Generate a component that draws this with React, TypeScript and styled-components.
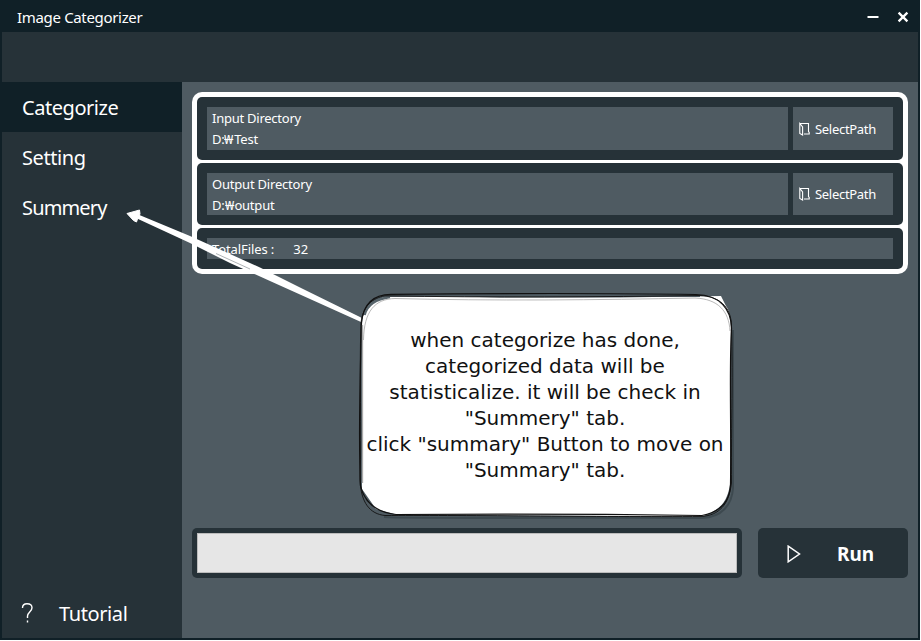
import React from "react";
import styled, { createGlobalStyle } from "styled-components";

const GlobalStyle = createGlobalStyle`
  * { box-sizing: border-box; }
  body { margin: 0; background: #fff; overflow: hidden; }
`;

const Window = styled.div`
  position: relative;
  width: 920px;
  height: 640px;
  padding: 0 2px 2px;
  background: #102027;
  color: #fff;
  font-family: "Noto Sans", "Noto Sans CJK KR", sans-serif;
  display: flex;
  flex-direction: column;
`;

const TitleBar = styled.header`
  height: 32px;
  flex: none;
  display: flex;
  align-items: center;
  justify-content: space-between;
  padding: 2px 9px 0 15px;
  font-size: 15px;
  letter-spacing: -0.33px;
`;

const WindowButtons = styled.div`
  display: flex;
  gap: 18px;
  svg { display: block; }
`;

const Banner = styled.div`
  height: 50px;
  flex: none;
  background: #263238;
`;

const Body = styled.div`
  flex: 1;
  display: flex;
`;

const Sidebar = styled.nav`
  width: 180px;
  display: flex;
  flex-direction: column;
  background: #263238;
`;

const NavItem = styled.div<{ $active?: boolean; $spacing: number }>`
  height: 50px;
  padding: 0 0 0 20px;
  display: flex;
  align-items: center;
  font-size: 20px;
  letter-spacing: ${(p) => p.$spacing}px;
  background: ${(p) => (p.$active ? "#102027" : "transparent")};
`;

const Tutorial = styled.div`
  margin-top: auto;
  height: 50px;
  padding: 0 0 0 18px;
  display: flex;
  align-items: center;
  gap: 26px;
  font-size: 20px;
  letter-spacing: -0.4px;
`;

const Main = styled.main`
  flex: 1;
  display: flex;
  flex-direction: column;
  padding: 10px 10px 60px;
  background: #4f5b62;
`;

const Panel = styled.section`
  display: flex;
  flex-direction: column;
  gap: 3px;
  padding: 5px;
  border-radius: 10px;
  background: #fff;
`;

const Card = styled.div<{ $height: number }>`
  height: ${(p) => p.$height}px;
  padding: 10px;
  display: flex;
  gap: 5px;
  border-radius: 5px;
  background: #263238;
`;

const Field = styled.div`
  flex: 1;
  padding: 1px 5px 0;
  background: #4f5b62;
  font-size: 13px;
  line-height: 21px;
  white-space: pre;
`;

const Line = styled.div<{ $spacing: number }>`
  letter-spacing: ${(p) => p.$spacing}px;
`;

const Won = styled.span`
  display: inline-block;
  width: 9.8px;
  font-size: 12px;
  line-height: 1;
  letter-spacing: 0;
  transform: scaleX(1.15);
  transform-origin: left;
`;

const TotalRow = styled.div`
  display: flex;
  gap: 19px;
`;

const SelectButton = styled.div`
  width: 100px;
  padding: 1px 0 0 6px;
  display: flex;
  align-items: center;
  gap: 5px;
  background: #4f5b62;
  font-size: 13px;
`;

const Footer = styled.div`
  margin-top: auto;
  height: 50px;
  display: flex;
  gap: 16px;
`;

const ProgressFrame = styled.div`
  width: 550px;
  padding: 5px;
  border-radius: 5px;
  background: #263238;
`;

const ProgressTrack = styled.div`
  height: 100%;
  border: 1px solid #bcbcbc;
  background: #e6e6e6;
`;

const RunButton = styled.div`
  width: 150px;
  display: flex;
  align-items: center;
  gap: 36px;
  padding: 1px 0 0 29px;
  border-radius: 5px;
  background: #263238;
  font-size: 19px;
  font-weight: 700;
`;

const Overlay = styled.svg`
  position: absolute;
  left: 0;
  top: 0;
  pointer-events: none;
`;

const CalloutText = styled.div`
  position: absolute;
  left: 345px;
  top: 327px;
  width: 400px;
  color: #111;
  font-family: "DejaVu Sans", sans-serif;
  font-size: 20px;
  line-height: 26px;
  text-align: center;
  white-space: nowrap;
`;

const FolderIcon = () => (
  <svg width="11" height="14" viewBox="0 0 11 14" fill="none" stroke="#fff">
    <path d="M1 1.500H9.500V9.500L10.200 10.500V12H5" strokeWidth="1.100" />
    <path d="M.8 1.500V11.500L3.600 13V5L.8 1.500Z" strokeWidth="1.100" />
  </svg>
);

const PathCard = ({ title, path, spacing }: { title: string; path: string; spacing: number }) => (
  <Card $height={62.5}>
    <Field>
      <Line $spacing={spacing}>{title}</Line>
      <Line $spacing={spacing}>D:<Won>₩</Won>{path}</Line>
    </Field>
    <SelectButton>
      <FolderIcon />
      <Line $spacing={-0.3}>SelectPath</Line>
    </SelectButton>
  </Card>
);

export default function App() {
  return (
    <>
      <GlobalStyle />
      <Window>
        <TitleBar>
          <span>Image Categorizer</span>
          <WindowButtons>
            <svg width="12" height="12" viewBox="0 0 12 12" stroke="#fff" strokeWidth="2">
              <path d="M0.500 6H11.500" />
            </svg>
            <svg width="12" height="12" viewBox="0 0 12 12" stroke="#fff" strokeWidth="2.3">
              <path d="M1.600 1.600L10.400 10.400M10.400 1.600L1.600 10.400" />
            </svg>
          </WindowButtons>
        </TitleBar>
        <Banner />
        <Body>
          <Sidebar>
            <NavItem $active $spacing={-0.45}>Categorize</NavItem>
            <NavItem $spacing={-0.4}>Setting</NavItem>
            <NavItem $spacing={-0.85}>Summery</NavItem>
            <Tutorial>
              <svg width="13" height="22" viewBox="0 0 13 22" fill="none" stroke="#fff" strokeWidth="1.4">
                <path d="M2.500 6C2.500 3 4 1.700 7 1.700S12 3.300 12 5.700C12 9.500 7.500 10.500 7.500 14V16M7.500 18.500V20.500" />
              </svg>
              <span>Tutorial</span>
            </Tutorial>
          </Sidebar>
          <Main>
            <Panel>
              <PathCard title="Input Directory" path="Test" spacing={-0.25} />
              <PathCard title="Output Directory" path="output" spacing={-0.2} />
              <Card $height={41.2}>
                <Field>
                  <TotalRow>
                    <Line $spacing={-0.1}>TotalFiles :</Line>
                    <Line $spacing={0}>32</Line>
                  </TotalRow>
                </Field>
              </Card>
            </Panel>
            <Footer>
              <ProgressFrame>
                <ProgressTrack />
              </ProgressFrame>
              <RunButton>
                <svg width="14" height="18" viewBox="0 0 14 18" fill="none" stroke="#fff" strokeWidth="1.5">
                  <path d="M1.200 1.200L12.500 9L1.200 16.800Z" />
                </svg>
                <span>Run</span>
              </RunButton>
            </Footer>
          </Main>
        </Body>
        <Overlay width="920" height="640" viewBox="0 0 920 640" fill="none">
          <path d="M362 318L300 287.500L260 267.500L190 236L137 214L137 218.500L190 243L230 263L270 281L310 299L361 322Z" fill="#fff" />
          <path d="M127 213.500L139.500 210L140 214L138 217.500L136.500 222L133.500 220.500Z" fill="#fff" stroke="#fff" strokeLinejoin="round" />
          <path d="M216 253.500L250 269" stroke="#8b9296" strokeWidth=".7" />
          <g stroke="#303a40" strokeOpacity=".55" strokeWidth="2">
            <path d="M384 517C420 519 640 517 702 518C722 517 732 505 733 488V330" />
          </g>
          <path d="M362 322C364 306 375 299 392 295L500 297.500L620 297.500L721 296L726 306C730 311 731 320 731 332L730 485C727 500 723 509 702 516.500L396 514.500L376 509L362 489Z" fill="#fff" />
          <path d="M364.500 315C367 305 376 299 390 297" stroke="#56636a" strokeWidth="2.500" />
          <path d="M363.500 340C364 311 375 299 395 298.500C490 301 600 300 695 298C718 299 729 311 730 331" stroke="#999" strokeWidth=".7" />
          <path d="M384 296C480 295 610 295 700 296" stroke="#4f5b62" strokeWidth="2" />
          <path d="M361.500 323C363 305 372 294.500 391 294.300C480 293.500 620 293.300 696 294.500C720 295 731 309 731.500 328C729 370 731.500 430 730.500 484C730 502 720 512 702 515.500C600 514 460 514 396 514.500C374 512 364 500 360.500 486C358 430 360.500 370 361.500 323Z" stroke="#111" strokeWidth="1.200" />
          <path d="M361 323C363 305 373 298 385 295.800C490 297.700 600 297 700 295.500C719 296.500 731 306 731.500 326C733 380 731 440 731.500 483C729 505 719 515 702 516.500C600 517 450 515 385 515.500C370 514 361 503 360 480C362 425 359 380 361 323Z" stroke="#111" strokeWidth=".9" />
          <path d="M362.500 325V483" stroke="#aaa" strokeWidth="1.300" />
        </Overlay>
        <CalloutText>
          <div>when categorize has done,</div>
          <div>categorized data will be</div>
          <div>statisticalize. it will be check in</div>
          <div>"Summery" tab.</div>
          <div>click "summary" Button to move on</div>
          <div>"Summary" tab.</div>
        </CalloutText>
      </Window>
    </>
  );
}
